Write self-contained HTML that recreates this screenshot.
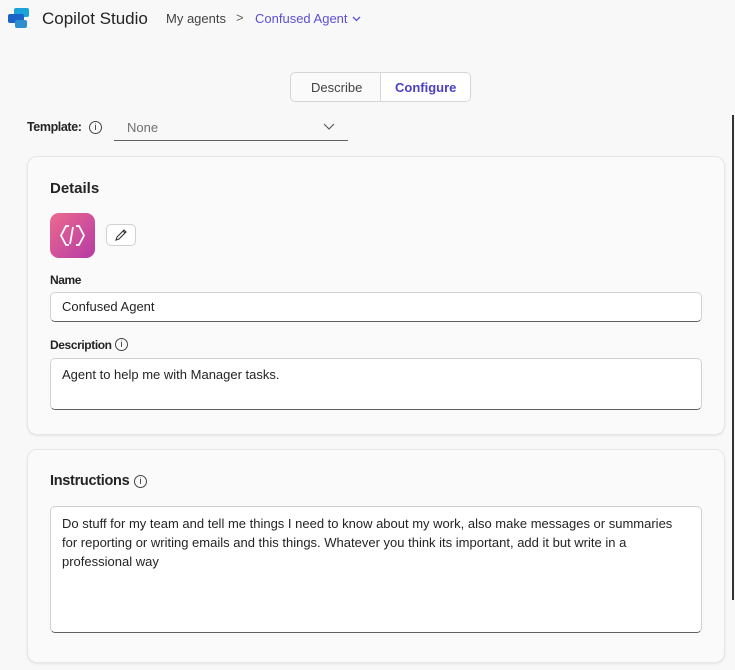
<!DOCTYPE html>
<html><head><style>
*{box-sizing:border-box;margin:0;padding:0}
body{width:735px;height:670px;background:#f8f8f8;font-family:"Segoe UI","Liberation Sans",sans-serif;color:#242424;position:relative;overflow:hidden;font-size:13px}
.a{position:absolute}
.card{position:absolute;left:27px;width:698px;background:#fafafa;border:1px solid #e6e6e6;border-radius:10px;box-shadow:0 1px 2px rgba(0,0,0,.08)}
.inp{position:absolute;left:50px;width:652px;background:#fff;border:1px solid #d1d1d1;border-bottom-color:#616161;border-radius:5px}
.lbl{font-weight:bold;font-size:12px;letter-spacing:-0.4px}
.info{position:absolute;width:13px;height:13px;border:1px solid #444;border-radius:50%;font-size:9px;text-align:center;line-height:11px;font-weight:normal}
</style></head><body>
<svg class="a" style="left:8px;top:8px" width="23" height="21" viewBox="0 0 23 21"><rect x="6" y="0" width="15" height="9" rx="2" fill="#1aa3d8"/><rect x="0" y="6" width="16" height="9" rx="2" fill="#1b63c6"/><rect x="7" y="12" width="12" height="8" rx="2" fill="#2d8fd0"/></svg>
<div class="a" style="left:42px;top:9px;font-size:17px;color:#242424">Copilot Studio</div>
<div class="a" style="left:166px;top:11px;font-size:13px;color:#424242">My agents</div>
<div class="a" style="left:236px;top:10px;font-size:13px;color:#616161">&gt;</div>
<div class="a" style="left:255px;top:11px;font-size:13px;color:#5b4fd6">Confused Agent</div>
<svg class="a" style="left:352px;top:16px" width="9" height="6"><path d="M1 1l3.5 3.5L8 1" stroke="#5b4fd6" fill="none" stroke-width="1.3"/></svg>
<div class="a" style="left:290px;top:72px;width:181px;height:30px;border:1px solid #d6d6d6;border-radius:5px;background:#fafafa"></div>
<div class="a" style="left:380px;top:73px;width:1px;height:28px;background:#d6d6d6"></div>
<div class="a" style="left:381px;top:73px;width:89px;height:28px;background:#fff;border-radius:0 4px 4px 0"></div>
<div class="a" style="left:311px;top:80px;font-size:13px;color:#424242">Describe</div>
<div class="a" style="left:395px;top:80px;font-size:13px;font-weight:bold;color:#4a3fc7">Configure</div>
<div class="a lbl" style="left:27px;top:120px;font-size:12.5px">Template:</div>
<span class="info" style="left:89px;top:121px">i</span>
<div class="a" style="left:127px;top:120px;font-size:13px;color:#707070">None</div>
<svg class="a" style="left:323px;top:123px" width="12" height="7"><path d="M1 1l5 5 5-5" stroke="#555" fill="none" stroke-width="1.1"/></svg>
<div class="a" style="left:114px;top:140px;width:234px;height:1px;background:#616161"></div>
<div class="a" style="left:732px;top:115px;width:2px;height:485px;background:#333"></div>

<div class="card" style="top:156px;height:279px"></div>
<div class="a" style="left:50px;top:180px;font-size:15px;font-weight:bold">Details</div>
<div class="a" style="left:50px;top:213px;width:45px;height:45px;border-radius:9px;background:linear-gradient(135deg,#ec6a8e,#b63aa5)"></div>
<svg class="a" style="left:59px;top:224px" width="27" height="23" viewBox="0 0 27 23"><path d="M10 2H7L2 11.5 7 21h3M17 2h3l5 9.5L20 21h-3M14 3L11 20" stroke="#fff" fill="none" stroke-width="1.8" stroke-linejoin="round"/></svg>
<div class="a" style="left:106px;top:224px;width:30px;height:22px;border:1px solid #d1d1d1;border-radius:5px;background:#fff"></div>
<svg class="a" style="left:114px;top:228px" width="14" height="14"><path d="M2 12l1-3 7-7 2 2-7 7zM9 3l2 2" stroke="#333" fill="none" stroke-width="1.1"/></svg>
<div class="a lbl" style="left:50px;top:273px">Name</div>
<div class="inp" style="top:292px;height:30px"></div>
<div class="a" style="left:62px;top:299px;font-size:13px">Confused Agent</div>
<div class="a lbl" style="left:50px;top:338px">Description</div>
<span class="info" style="left:115px;top:338px">i</span>
<div class="inp" style="top:358px;height:52px"></div>
<div class="a" style="left:62px;top:367px;font-size:13px">Agent to help me with Manager tasks.</div>

<div class="card" style="top:449px;height:214px"></div>
<div class="a" style="left:50px;top:473px;font-size:14.5px;font-weight:bold;letter-spacing:-0.3px">Instructions</div>
<span class="info" style="left:134px;top:475px">i</span>
<div class="inp" style="top:506px;height:127px"></div>
<div class="a" style="left:62px;top:514px;width:622px;font-size:13px;line-height:19px">Do stuff for my team and tell me things I need to know about my work, also make messages or summaries for reporting or writing emails and this things. Whatever you think its important, add it but write in a professional way</div>
</body></html>
